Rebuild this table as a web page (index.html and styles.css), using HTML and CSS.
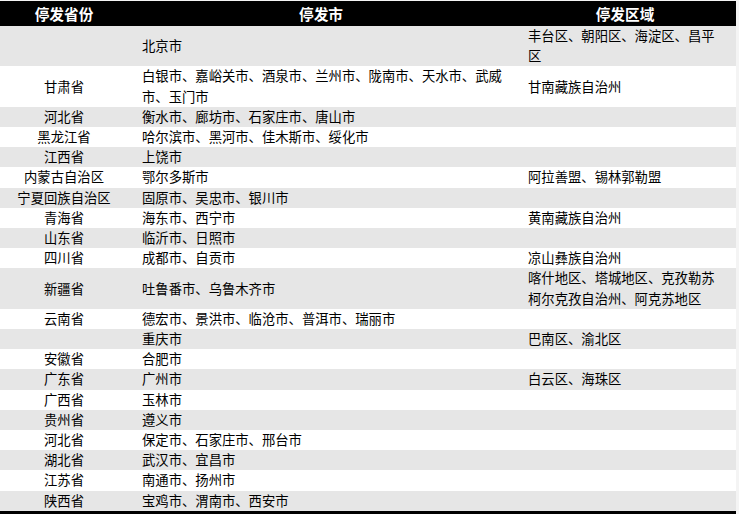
FILE: index.html
```html
<!DOCTYPE html>
<html lang="zh-CN">
<head>
<meta charset="utf-8">
<title>停发区域</title>
<link rel="stylesheet" href="styles.css">
</head>
<body>
<table class="stop-table">
  <colgroup>
    <col class="col-prov">
    <col class="col-city">
    <col class="col-area">
  </colgroup>
  <thead>
    <tr>
      <th>停发省份</th>
      <th>停发市</th>
      <th>停发区域</th>
    </tr>
  </thead>
  <tbody>
    <tr><td></td><td>北京市</td><td>丰台区、朝阳区、海淀区、昌平区</td></tr>
    <tr><td>甘肃省</td><td>白银市、嘉峪关市、酒泉市、兰州市、陇南市、天水市、武威市、玉门市</td><td>甘南藏族自治州</td></tr>
    <tr><td>河北省</td><td>衡水市、廊坊市、石家庄市、唐山市</td><td></td></tr>
    <tr><td>黑龙江省</td><td>哈尔滨市、黑河市、佳木斯市、绥化市</td><td></td></tr>
    <tr><td>江西省</td><td>上饶市</td><td></td></tr>
    <tr><td>内蒙古自治区</td><td>鄂尔多斯市</td><td>阿拉善盟、锡林郭勒盟</td></tr>
    <tr><td>宁夏回族自治区</td><td>固原市、吴忠市、银川市</td><td></td></tr>
    <tr><td>青海省</td><td>海东市、西宁市</td><td>黄南藏族自治州</td></tr>
    <tr><td>山东省</td><td>临沂市、日照市</td><td></td></tr>
    <tr><td>四川省</td><td>成都市、自贡市</td><td>凉山彝族自治州</td></tr>
    <tr><td>新疆省</td><td>吐鲁番市、乌鲁木齐市</td><td>喀什地区、塔城地区、克孜勒苏柯尔克孜自治州、阿克苏地区</td></tr>
    <tr><td>云南省</td><td>德宏市、景洪市、临沧市、普洱市、瑞丽市</td><td></td></tr>
    <tr><td></td><td>重庆市</td><td>巴南区、渝北区</td></tr>
    <tr><td>安徽省</td><td>合肥市</td><td></td></tr>
    <tr><td>广东省</td><td>广州市</td><td>白云区、海珠区</td></tr>
    <tr><td>广西省</td><td>玉林市</td><td></td></tr>
    <tr><td>贵州省</td><td>遵义市</td><td></td></tr>
    <tr><td>河北省</td><td>保定市、石家庄市、邢台市</td><td></td></tr>
    <tr><td>湖北省</td><td>武汉市、宜昌市</td><td></td></tr>
    <tr><td>江苏省</td><td>南通市、扬州市</td><td></td></tr>
    <tr><td>陕西省</td><td>宝鸡市、渭南市、西安市</td><td></td></tr>
  </tbody>
</table>
</body>
</html>
```
FILE: styles.css
```css
html {
  background: #f4f4f4;
}

html, body {
  margin: 0;
  padding: 0;
}

body {
  padding-top: 1px;
  font-family: "Noto Sans CJK SC", "Noto Sans", sans-serif;
  color: #000000;
}

.stop-table {
  width: 736px;
  table-layout: fixed;
  border-collapse: collapse;
  border-bottom: 3px solid #000000;
  background: #ffffff;
}

.col-prov { width: 128px; }
.col-city { width: 386px; }
.col-area { width: 222px; }

.stop-table th {
  background: #000000;
  color: #ffffff;
  font-size: 14.67px;
  font-weight: 700;
  height: 25px;
  padding: 0;
  line-height: 25px;
  text-align: center;
}

.stop-table td {
  font-size: 13.33px;
  line-height: 20.2px;
  padding: 0 8px 0 14px;
  vertical-align: middle;
  text-align: left;
}

.stop-table td:first-child {
  padding: 0;
  text-align: center;
}

.stop-table td:last-child {
  padding-right: 10px;
}

.stop-table tbody tr:nth-child(odd) {
  background: #e6e6e6;
}

.stop-table tbody tr:nth-child(even) {
  background: #ffffff;
}
```
